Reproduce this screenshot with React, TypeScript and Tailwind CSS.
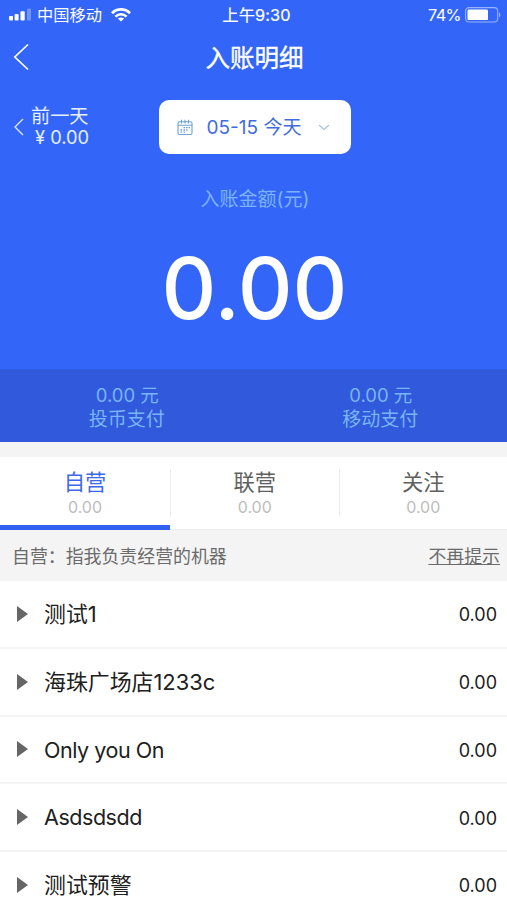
const tabs = [
  { name: "自营", amount: "0.00" },
  { name: "联营", amount: "0.00" },
  { name: "关注", amount: "0.00" },
];

const payments = [
  { name: "投币支付", amount: "0.00 元" },
  { name: "移动支付", amount: "0.00 元" },
];

const shops = [
  { name: "测试1", amount: "0.00" },
  { name: "海珠广场店1233c", amount: "0.00" },
  { name: "Only you On", amount: "0.00", latin: true },
  { name: "Asdsdsdd", amount: "0.00", latin: true },
  { name: "测试预警", amount: "0.00" },
];

function SignalIcon() {
  return (
    <svg width="23" height="13" viewBox="0 0 23 13" fill="#fff">
      <rect x="0" y="8" width="4" height="4.5" rx="1" />
      <rect x="5.6" y="6" width="4" height="6.5" rx="1" />
      <rect x="11.5" y="3.2" width="4.2" height="9.3" rx="1" />
      <rect x="18" y="0.5" width="4" height="12" rx="1" opacity="0.3" />
    </svg>
  );
}

function WifiIcon() {
  return (
    <svg width="20" height="14" viewBox="0 0 20 14" fill="none" stroke="#fff">
      <path d="M1 5.2C6 0.2 14 0.2 19 5.2" strokeWidth="2.7" />
      <path d="M4.4 8.6C7.6 5.5 12.4 5.5 15.6 8.6" strokeWidth="2.5" />
      <path d="M10 13.6L6.8 10.6C8.6 9 11.4 9 13.2 10.6Z" fill="#fff" stroke="none" />
    </svg>
  );
}

function BatteryIcon() {
  return (
    <svg width="36" height="16" viewBox="0 0 36 16" fill="none">
      <rect x="0.6" y="0.6" width="32" height="14.4" rx="3.4" stroke="#fff" strokeOpacity="0.5" strokeWidth="1.1" />
      <rect x="2.5" y="2.5" width="20.5" height="10.6" rx="1.2" fill="#fff" />
      <path d="M34 5.2C35.8 6 35.8 9.6 34 10.4Z" fill="#fff" fillOpacity="0.5" />
    </svg>
  );
}

function CalendarIcon() {
  return (
    <svg width="16" height="17" viewBox="0 0 16 17" fill="none" stroke="#6ba3d6" strokeWidth="1.1">
      <rect x="1" y="2.8" width="14" height="12.7" rx="1.5" />
      <path d="M1 6.3H15M4.5 0.8V4.5M8 0.8V4.5M11.5 0.8V4.5" />
      <path d="M6.5 8.7H8M9 8.7H10.5M11.5 8.7H13M3.5 11H5M6.5 11H8M9 11H10.5M3.5 13.2H5M6.5 13.2H8" strokeWidth="1.3" />
    </svg>
  );
}

function StatusBar() {
  return (
    <div className="grid h-[30px] grid-cols-[1fr_auto_1fr] items-center pr-[6px] pl-[9px] text-[16.3px] leading-none">
      <div className="flex items-center">
        <SignalIcon />
        <span className="ml-[5px]">中国移动</span>
        <span className="ml-[9px]">
          <WifiIcon />
        </span>
      </div>
      <span className="pl-[3px] tracking-[0.1px] [-webkit-text-stroke:0.2px_#fff]">上午9:30</span>
      <div className="flex items-center justify-end gap-[4px]">
        <span className="tracking-[-0.6px]">74%</span>
        <BatteryIcon />
      </div>
    </div>
  );
}

export default function App() {
  return (
    <main className="h-[900px] w-full overflow-hidden bg-white font-['Inter','Noto_Sans_CJK_SC',sans-serif]">
      <header className="flex h-[369px] flex-col bg-[#3366f8] text-white">
        <StatusBar />

        <div className="grid h-[54px] grid-cols-[1fr_auto_1fr] items-center">
          <svg className="ml-[13px]" width="17" height="28" viewBox="0 0 17 28" fill="none" stroke="#fff" strokeWidth="1.7">
            <path d="M15 1.5L1.8 14L15 26.5" />
          </svg>
          <h1 className="pt-[2px] pl-[2px] text-[24.5px] leading-none [-webkit-text-stroke:0.35px_#fff]">入账明细</h1>
        </div>

        <div className="mt-[16px] flex h-[54px] items-center">
          <div className="flex w-[158.5px] items-center pl-[14px]">
            <svg width="10" height="18" viewBox="0 0 10 18" fill="none" stroke="#dfe9ff" strokeWidth="1.3">
              <path d="M9 1L1 9L9 17" />
            </svg>
            <div className="ml-[7px] text-[#e6f0ff]">
              <div className="text-[19.2px] leading-[21px]">前一天</div>
              <div className="pl-[4px] text-[18.3px] leading-[21px]">¥ 0.00</div>
            </div>
          </div>
          <div className="flex h-[54px] w-[192.5px] items-center rounded-[10px] bg-white pl-[18px]">
            <CalendarIcon />
            <span className="ml-[14px] pt-[1px] text-[19px] leading-none text-[#416cdf]">05-15 今天</span>
            <svg className="ml-[17px]" width="12" height="7" viewBox="0 0 12 7" fill="none" stroke="#9fc4e0" strokeWidth="1.1">
              <path d="M1 1L6 5.5L11 1" />
            </svg>
          </div>
        </div>

        <div className="mt-[36px] pl-[3px] text-center text-[19px] leading-[20px] text-[#7cb3f8]">入账金额(元)</div>
        <div className="mt-[39px] pl-[2px] text-center text-[85px] leading-[80px] font-medium">0.00</div>
      </header>

      <div className="grid h-[73px] grid-cols-2 bg-[#305adb] pt-[14px] text-center text-[19px] leading-[26px] text-[#79b4f4]">
        {payments.map((item) => (
          <div key={item.name}>
            <div className="pl-[1px] text-[18.5px] leading-[24px]">{item.amount}</div>
            <div>{item.name}</div>
          </div>
        ))}
      </div>

      <div className="h-[15px] bg-[#f4f4f4]" />

      <div className="grid h-[73px] grid-cols-[170px_168.5px_1fr] bg-white">
        {tabs.map((tab, index) => (
          <div
            key={tab.name}
            className={
              index === 0
                ? "flex border-b-5 border-[#315ff0] pt-[12px] text-[#3d68ea]"
                : "flex border-b border-[#ededed] pt-[12px] text-[#606060]"
            }
          >
            {index > 0 && <div className="h-[48px] w-px bg-[#ececec]" />}
            <div className="flex-1 text-center">
              <div className="text-[21.3px] leading-[26px]">{tab.name}</div>
              <div className="text-[16px] leading-[25px] text-[#bdbdbd]">{tab.amount}</div>
            </div>
          </div>
        ))}
      </div>

      <div className="flex h-[51px] items-center justify-between bg-[#f4f4f4] pr-[7px] pl-[12px] text-[17.9px] leading-none text-[#6b6b6b]">
        <span className="pt-[3px]">自营：指我负责经营的机器</span>
        <span className="pt-[3px] underline decoration-1 underline-offset-1">不再提示</span>
      </div>

      <ul>
        {shops.map((shop) => (
          <li
            key={shop.name}
            className="flex h-[67.75px] items-center border-b-2 border-[#f5f5f5] pr-[10px] pl-[17px] text-[#202020]"
          >
            <svg width="11" height="16" viewBox="0 0 11 16" fill="#666">
              <path d="M0 0L11 8L0 16Z" />
            </svg>
            <span
              className={
                shop.latin
                  ? "ml-[16px] flex-1 pt-[2px] text-[21.5px] leading-none tracking-[-0.45px]"
                  : "ml-[16px] flex-1 pt-[3px] text-[21.9px] leading-none"
              }
            >
              {shop.name}
            </span>
            <span className="pt-[3px] text-[18px] leading-none">{shop.amount}</span>
          </li>
        ))}
      </ul>
    </main>
  );
}
